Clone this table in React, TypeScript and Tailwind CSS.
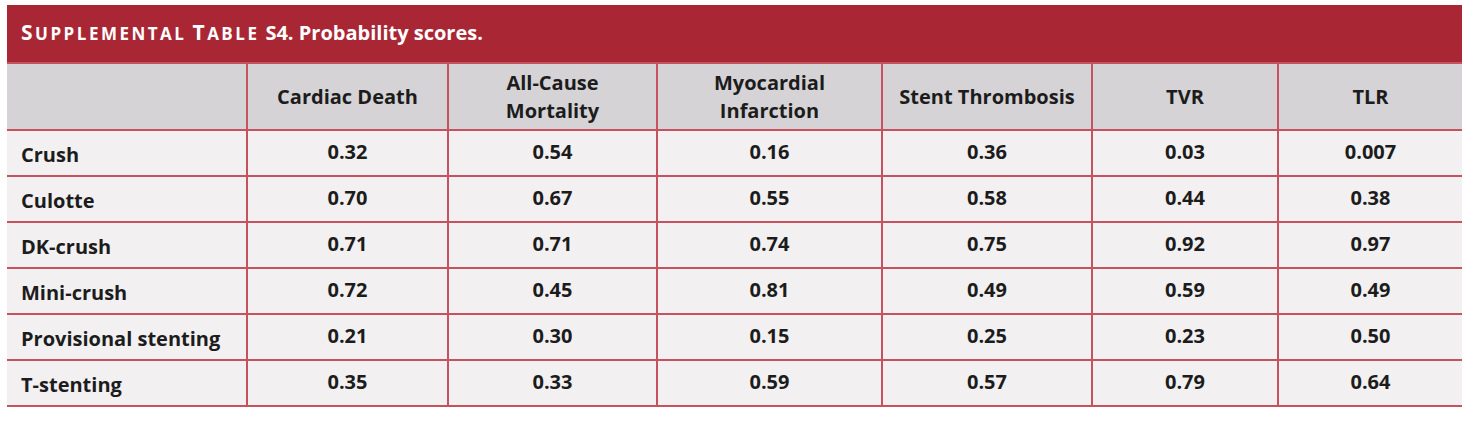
import React from "react";

const headerLines: string[][] = [
  ["Cardiac Death"],
  ["All-Cause", "Mortality"],
  ["Myocardial", "Infarction"],
  ["Stent Thrombosis"],
  ["TVR"],
  ["TLR"],
];

const rows: { label: string; values: string[] }[] = [
  { label: "Crush", values: ["0.32", "0.54", "0.16", "0.36", "0.03", "0.007"] },
  { label: "Culotte", values: ["0.70", "0.67", "0.55", "0.58", "0.44", "0.38"] },
  { label: "DK-crush", values: ["0.71", "0.71", "0.74", "0.75", "0.92", "0.97"] },
  { label: "Mini-crush", values: ["0.72", "0.45", "0.81", "0.49", "0.59", "0.49"] },
  { label: "Provisional stenting", values: ["0.21", "0.30", "0.15", "0.25", "0.23", "0.50"] },
  { label: "T-stenting", values: ["0.35", "0.33", "0.59", "0.57", "0.79", "0.64"] },
];

const grid =
  "grid grid-cols-[241px_201px_209px_225px_210px_186px_183px]";

// small caps drawn by hand: first letter full size, rest smaller uppercase
function SmallCaps({ word }: { word: string }) {
  return (
    <span className="tracking-[2.5px]">
      <span className="text-[21px]">{word[0]}</span>
      <span className="text-[17px] uppercase">{word.slice(1)}</span>
    </span>
  );
}

export default function App() {
  return (
    <div className="min-h-[422px] bg-white pl-[7px] pt-[5px] font-['Open_Sans',sans-serif] text-[#1c1c1c]">
      <div className="w-[1455px]">
        <div className="flex h-[57px] items-baseline gap-[6px] bg-[#a92735] pl-[14px] pt-[17px] font-bold leading-none text-white">
          <SmallCaps word="Supplemental" />
          <SmallCaps word="Table" />
          <span className="text-[20px]">S4. Probability scores.</span>
        </div>

        <div className={`${grid} h-[69px] border-y-2 border-[#c5525f] bg-[#d5d3d6]`}>
          <div className="border-r-2 border-[#c5525f]" />
          {headerLines.map((lines, i) => (
            <div
              key={i}
              className={`flex flex-col items-center justify-center text-[20px] font-bold leading-[28px] ${
                i < headerLines.length - 1 ? "border-r-2 border-[#c5525f]" : ""
              }`}
            >
              {lines.map((l) => (
                <span key={l}>{l}</span>
              ))}
            </div>
          ))}
        </div>

        {rows.map((row) => (
          <div
            key={row.label}
            className={`${grid} h-[46px] border-b-2 border-[#c5525f] bg-[#f2f0f1]`}
          >
            <div className="flex items-center border-r-2 border-[#c5525f] pl-[14px] pt-[3px] text-[20px] font-bold">
              {row.label}
            </div>
            {row.values.map((v, i) => (
              <div
                key={i}
                className={`flex items-center justify-center pb-[2px] text-[20px] font-bold ${
                  i < row.values.length - 1 ? "border-r-2 border-[#c5525f]" : ""
                }`}
              >
                {v}
              </div>
            ))}
          </div>
        ))}
      </div>
    </div>
  );
}
